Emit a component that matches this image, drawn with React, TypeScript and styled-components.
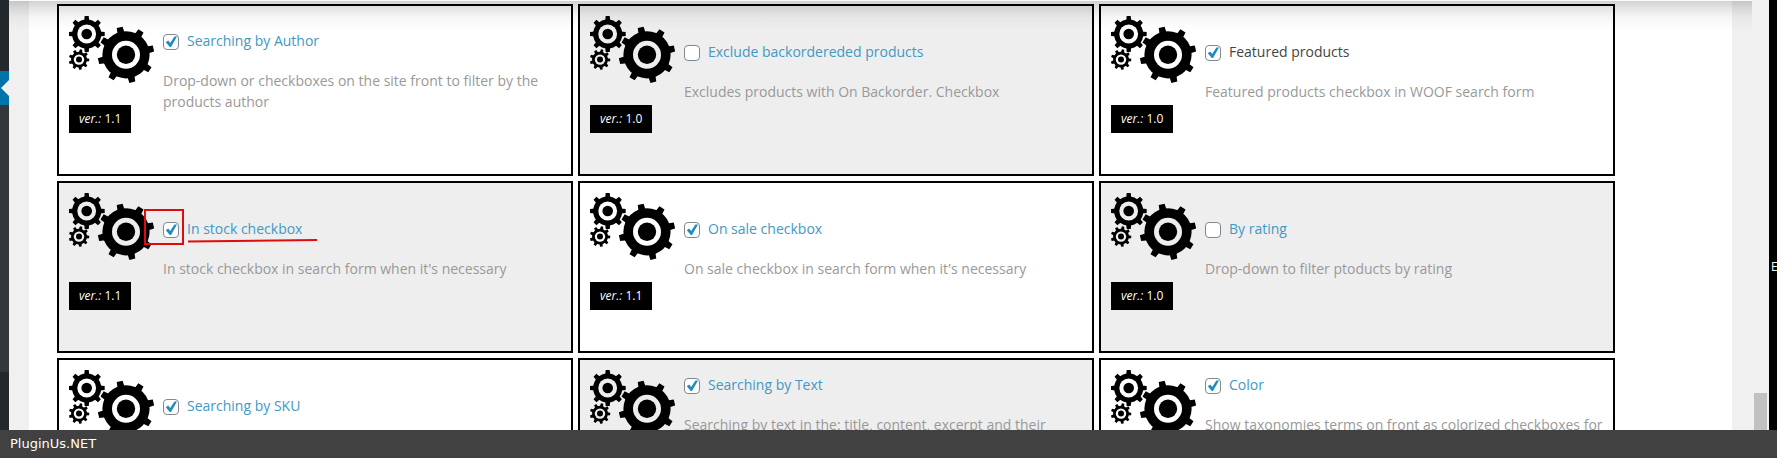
import { Fragment, useId } from 'react';
import styled, { createGlobalStyle } from 'styled-components';

const GlobalStyle = createGlobalStyle`
  * { box-sizing: border-box; }
  body {
    margin: 0;
    overflow: hidden;
    background: #fff;
    font: 14px/21px "Open Sans", "Noto Sans", sans-serif;
  }
`;

const Page = styled.div`
  display: flex;
  flex-direction: column;
  height: 100vh;
  overflow: hidden;
`;

const Workspace = styled.div`
  position: relative;
  display: flex;
  flex: 1;
  min-height: 0;
  overflow: hidden;
  background: #f0f0f0;
`;

const AdminMenu = styled.nav`
  display: flex;
  flex-direction: column;
  flex: none;
  width: 9px;
  background: #23282d;
`;

const MenuSpacer = styled.div`
  height: 71px;
`;

const CurrentItem = styled.div`
  display: flex;
  justify-content: flex-end;
  height: 34px;
  background: #0073aa;
`;

const SubMenu = styled.div`
  height: 267px;
  background: #32373c;
`;

const Shade = styled.div`
  position: absolute;
  top: 0;
  left: 9px;
  right: 25px;
  height: 30px;
  border-top: 1px solid #fafafa;
  background: linear-gradient(
    rgba(12, 14, 24, 0.19),
    rgba(12, 14, 24, 0.11) 25%,
    rgba(12, 14, 24, 0.04) 55%,
    rgba(12, 14, 24, 0)
  );
  pointer-events: none;
`;

const Panel = styled.main`
  flex: 1;
  min-width: 0;
  margin: 0 20px;
  padding: 4px 117px 0 28px;
  background: #fff;
`;

const ExtensionList = styled.ul`
  display: grid;
  grid-template-columns: repeat(3, 1fr);
  grid-auto-rows: minmax(172px, auto);
  gap: 5px;
  margin: 0;
  padding: 0;
  list-style: none;
`;

const Card = styled.li<{ $muted: boolean }>`
  display: flex;
  align-items: flex-start;
  gap: 9px;
  padding: 10px;
  border: 2px solid #000;
  background: ${(p) => (p.$muted ? '#eee' : '#fff')};
`;

const Side = styled.div`
  display: flex;
  flex-direction: column;
  align-items: flex-start;
  gap: 21px;
  flex: none;
  width: 85px;

  svg { display: block; }
`;

const Version = styled.span`
  min-width: 62px;
  padding: 0 10px;
  background: #000;
  color: #fff;
  font-size: 12px;
  font-weight: 500;
  line-height: 28px;
  white-space: nowrap;
`;

const Details = styled.div`
  display: flex;
  flex-direction: column;
  justify-content: center;
  gap: 19px;
  min-width: 0;
  height: 110px;
`;

const TitleRow = styled.div`
  display: flex;
  align-items: flex-start;
  gap: 8px;
`;

const Tick = styled.span`
  display: grid;
  width: 16px;
  height: 16px;
  margin-top: 4px;

  > * { grid-area: 1 / 1; }
  > svg { pointer-events: none; }
`;

const TickInput = styled.input`
  appearance: none;
  width: 16px;
  height: 16px;
  margin: 0;
  border: 1px solid #7e8993;
  border-radius: 4px;
  background: #fff;

  & + svg { visibility: hidden; }
  &:checked + svg { visibility: visible; }
`;

const TitleLink = styled.a`
  color: #4199c4;
  text-decoration: none;
`;

const TitleLabel = styled.label`
  color: #444;
`;

const Description = styled.p`
  margin: 0;
  color: #999;
`;

const Marked = styled.div`
  position: relative;
`;

const RedFrame = styled.span`
  position: absolute;
  top: -9px;
  left: -19px;
  width: 40px;
  height: 36px;
  border: 2px solid #e00b0b;
  pointer-events: none;
`;

const RedLine = styled.svg`
  position: absolute;
  top: 21px;
  left: 25px;
  pointer-events: none;
`;

const ScrollTrack = styled.div`
  display: flex;
  flex-direction: column;
  justify-content: flex-end;
  flex: none;
  width: 17px;
  padding: 0 2px;
  background: #f1f1f1;
`;

const ScrollThumb = styled.div`
  height: 37px;
  background: #c1c1c1;
`;

const Neighbour = styled.aside`
  flex: none;
  width: 8px;
  padding: 256px 0 0 2px;
  overflow: hidden;
  background: #020202;
  color: #fff;
  font-size: 12px;
`;

const Footer = styled.footer`
  flex: none;
  height: 28px;
  padding: 0 10px;
  border-bottom: 1px solid #463c40;
  background: #414141;
  color: #fff;
  font: 13px/27px "DejaVu Sans", sans-serif;
`;

type GearProps = { x: number; y: number; body: number; tip: number; tooth: number; ring: number; hub: number; turn: number; teeth: number; hole: string };

function Gear({ x, y, body, tip, tooth, ring, hub, turn, teeth, hole }: GearProps) {
  const half = tooth / 2;
  return (
    <g transform={`translate(${x} ${y})`}>
      {Array.from({ length: teeth }, (_, i) => (
        <path
          key={i}
          transform={`rotate(${turn + (i * 360) / teeth})`}
          d={`M${-half - 0.6} ${-body + 2}L${-half} ${-tip}H${half}L${half + 0.6} ${-body + 2}Z`}
        />
      ))}
      <circle r={body} />
      <circle r={ring} fill={hole} />
      <circle r={hub} />
    </g>
  );
}

function Gears({ hole }: { hole: string }) {
  return (
    <svg width="85" height="68" viewBox="0 0 85 68" aria-hidden="true">
      <Gear x={17.7} y={18} body={14.6} tip={18} tooth={4} ring={9.4} hub={5.3} turn={0} teeth={8} hole={hole} />
      <Gear x={10} y={43.6} body={7.9} tip={10.2} tooth={2.4} ring={5.2} hub={3} turn={12} teeth={9} hole={hole} />
      <Gear x={57} y={38.8} body={23.6} tip={28.2} tooth={6} ring={14} hub={9.2} turn={-13} teeth={8} hole={hole} />
    </svg>
  );
}

type Extension = { title: string; text: string; version: string; on: boolean; muted: boolean; plain?: boolean; marked?: boolean };

const extensions: Extension[] = [
  { title: 'Searching by Author', text: 'Drop-down or checkboxes on the site front to filter by the products author', version: '1.1', on: true, muted: false },
  { title: 'Exclude backordereded products', text: 'Excludes products with On Backorder. Checkbox', version: '1.0', on: false, muted: true },
  { title: 'Featured products', text: 'Featured products checkbox in WOOF search form', version: '1.0', on: true, muted: false, plain: true },
  { title: 'In stock checkbox', text: "In stock checkbox in search form when it's necessary", version: '1.1', on: true, muted: true, marked: true },
  { title: 'On sale checkbox', text: "On sale checkbox in search form when it's necessary", version: '1.1', on: true, muted: false },
  { title: 'By rating', text: 'Drop-down to filter ptoducts by rating', version: '1.0', on: false, muted: true },
  { title: 'Searching by SKU', text: 'Searching by products SKU', version: '1.1', on: true, muted: false },
  { title: 'Searching by Text', text: 'Searching by text in the: title, content, excerpt and their combinations on the site front, with suggestions shown while the customer is typing', version: '1.1', on: true, muted: true },
  { title: 'Color', text: 'Show taxonomies terms on front as colorized checkboxes for the product attributes, so that customers can pick a color in the search form', version: '1.1', on: true, muted: false },
];

function ExtensionCard({ item }: { item: Extension }) {
  const id = useId();
  const Wrap = item.marked ? Marked : Fragment;
  return (
    <Card $muted={item.muted}>
      <Side>
        <Gears hole={item.muted ? '#eee' : '#fff'} />
        <Version><i>ver.:</i> {item.version}</Version>
      </Side>
      <Details>
        <Wrap>
          <TitleRow>
            <Tick>
              <TickInput type="checkbox" id={id} defaultChecked={item.on} aria-label={item.title} />
              <svg width="16" height="16" viewBox="0 0 16 16" aria-hidden="true">
                <path d="M2.8 8.2L5.2 6.6L7.2 8.9L11.4 2.6H14L8 13H6.8Z" fill="#1e8cbe" />
              </svg>
            </Tick>
            {item.plain
              ? <TitleLabel htmlFor={id}>{item.title}</TitleLabel>
              : <TitleLink href="#">{item.title}</TitleLink>}
          </TitleRow>
          {item.marked && (
            <>
              <RedFrame />
              <RedLine width="129" height="4" aria-hidden="true">
                <path d="M0 2.6L129 1" stroke="#e00b0b" strokeWidth="2" />
              </RedLine>
            </>
          )}
        </Wrap>
        <Description>{item.text}</Description>
      </Details>
    </Card>
  );
}

export default function App() {
  return (
    <Page>
      <GlobalStyle />
      <Workspace>
        <AdminMenu aria-label="Admin menu">
          <MenuSpacer />
          <CurrentItem>
            <svg width="8" height="34" viewBox="0 0 8 34" aria-hidden="true">
              <path d="M8 9L0 17L8 25Z" fill="#f0f0f0" />
            </svg>
          </CurrentItem>
          <SubMenu />
        </AdminMenu>
        <Panel>
          <ExtensionList>
            {extensions.map((item) => <ExtensionCard key={item.title} item={item} />)}
          </ExtensionList>
        </Panel>
        <ScrollTrack><ScrollThumb /></ScrollTrack>
        <Neighbour>E</Neighbour>
        <Shade />
      </Workspace>
      <Footer>PluginUs.NET</Footer>
    </Page>
  );
}
